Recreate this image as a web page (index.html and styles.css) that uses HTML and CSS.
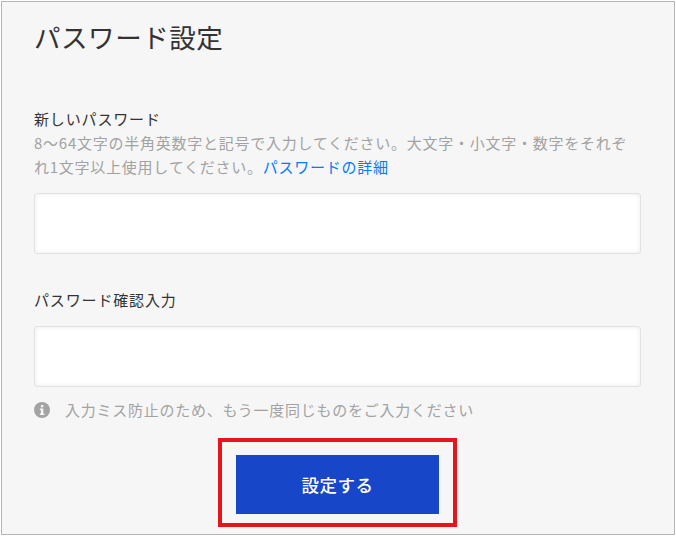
FILE: index.html
```html
<!DOCTYPE html>
<html lang="ja">
<head>
  <meta charset="UTF-8">
  <meta name="viewport" content="width=device-width, initial-scale=1.0">
  <title>パスワード設定</title>
  <link rel="stylesheet" href="styles.css">
</head>
<body>
  <form class="panel">
    <h1 class="title">パスワード設定</h1>

    <div class="field field-new">
      <label class="label" for="newPassword">新しいパスワード</label>
      <p class="hint">8〜64文字の半角英数字と記号で入力してください。大文字・小文字・数字をそれぞれ1文字以上使用してください。<a href="#" class="link">パスワードの詳細</a></p>
      <input id="newPassword" class="input" type="password">
    </div>

    <div class="field field-confirm">
      <label class="label" for="confirmPassword">パスワード確認入力</label>
      <input id="confirmPassword" class="input" type="password">
      <p class="note">
        <svg class="note-icon" viewBox="0 0 16 16" aria-hidden="true">
          <circle cx="8" cy="8" r="8" fill="#a3a3a3"/>
          <rect x="6.9" y="3" width="2.4" height="2.3" fill="#f6f6f6"/>
          <path d="M5.9 6.6h3.4v4.9h1v1.4H5.9v-1.4h1V8H5.9z" fill="#f6f6f6"/>
        </svg>
        <span>入力ミス防止のため、もう一度同じものをご入力ください</span>
      </p>
    </div>

    <div class="actions">
      <div class="highlight">
        <button class="submit" type="button">設定する</button>
      </div>
    </div>
  </form>
</body>
</html>
```

FILE: styles.css
```css
* {
  box-sizing: border-box;
}

body {
  margin: 0;
  padding: 1px 1px 0;
  font-family: "Noto Sans CJK JP", "Noto Sans", sans-serif;
  background-color: #fff;
}

.panel {
  height: 534px;
  padding: 0 33px 0 32px;
  border: 1px solid #b5b5b5;
  background-color: #f6f6f6;
}

.title {
  margin: 0;
  padding-top: 16px;
  font-size: 26.5px;
  line-height: 38px;
  font-weight: 400;
  letter-spacing: 0.55px;
  color: #333;
}

.field-new {
  margin-top: 51px;
}

.field-confirm {
  margin-top: 34px;
}

.label {
  display: block;
  font-size: 15px;
  line-height: 24px;
  letter-spacing: 0.85px;
  color: #333;
}

.hint {
  margin: 0 0 14px;
  font-size: 15px;
  line-height: 24px;
  letter-spacing: 0.75px;
  color: #a2a2a2;
}

.link {
  color: #007bff;
  text-decoration: none;
}

.input {
  display: block;
  width: 100%;
  height: 61px;
  border: 1px solid #e2e2e2;
  border-radius: 3px;
  background-color: #fff;
  box-shadow: inset 0 0 5px rgba(0,0,0,0.08);
}

.field-confirm .label {
  margin-bottom: 14px;
}

.note {
  display: flex;
  align-items: center;
  gap: 15px;
  margin: 11px 0 0;
  font-size: 15px;
  line-height: 24px;
  letter-spacing: 0.75px;
  color: #a2a2a2;
}

.note-icon {
  width: 16px;
  height: 16px;
}

.actions {
  display: flex;
  justify-content: center;
  margin-top: 16px;
}

.highlight {
  padding: 13px 14px 9px;
  border: 4px solid #e8141c;
}

.submit {
  display: block;
  width: 203px;
  height: 59px;
  border: none;
  font-family: inherit;
  font-size: 17.5px;
  font-weight: 500;
  letter-spacing: 0.5px;
  color: #fff;
  background-color: #1846c8;
  cursor: pointer;
}
```
